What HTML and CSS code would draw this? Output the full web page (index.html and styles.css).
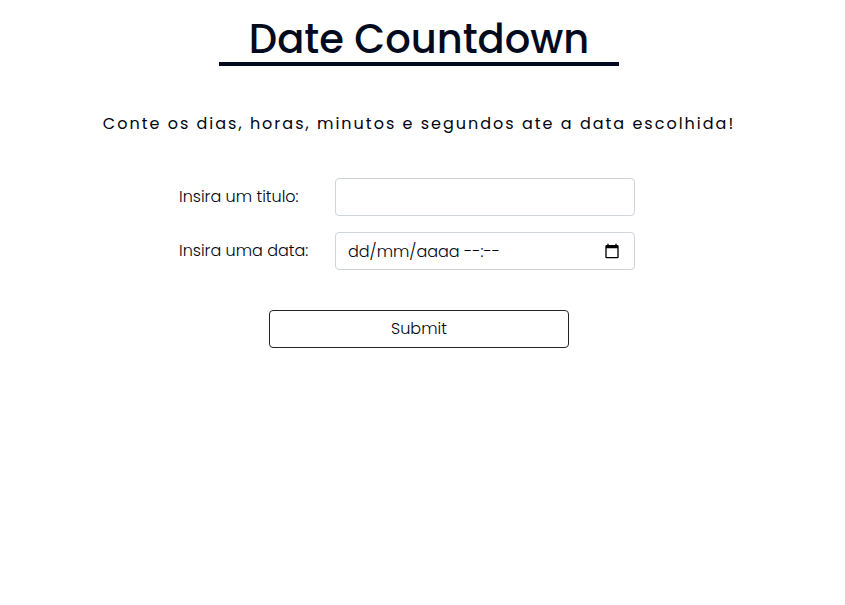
FILE: index.html
```html
<!DOCTYPE html>
<html lang="pt-BR">
<head>
<meta charset="utf-8">
<title>Date Countdown</title>
<link rel="stylesheet" href="styles.css">
</head>
<body>
<main class="page">
  <h1 class="title">Date Countdown</h1>
  <p class="subtitle">Conte os dias, horas, minutos e segundos ate a data escolhida!</p>
  <form class="form">
    <div class="fields">
      <label for="titulo">Insira um titulo:</label>
      <input class="control" id="titulo" type="text">
      <label for="data">Insira uma data:</label>
      <div class="date">
        <input class="control" id="data" type="text" placeholder="dd/mm/aaaa --:--">
        <svg class="calendar" viewBox="0 0 24 24" width="16" height="16" aria-hidden="true"><path d="M20 3h-1V1h-2v2H7V1H5v2H4c-1.100 0-2 .9-2 2v16c0 1.100.9 2 2 2h16c1.100 0 2-.9 2-2V5c0-1.100-.9-2-2-2zm0 18H4V8h16v13z"/></svg>
      </div>
    </div>
    <button class="submit" type="submit">Submit</button>
  </form>
</main>
</body>
</html>
```
FILE: styles.css
```css
* { box-sizing: border-box; }

body {
  margin: 0;
  background: #fff;
  color: #00040f;
  font: 300 16px/24px Poppins, Lato, sans-serif;
}

.page {
  display: flex;
  flex-direction: column;
  align-items: center;
  padding: 16px 7px 0 0;
}

.title {
  width: 400px;
  max-width: 100%;
  margin: 0;
  border-bottom: 4px solid #020a1e;
  color: #020a1e;
  font-size: 40px;
  font-weight: 500;
  line-height: 46px;
  text-align: center;
}

.subtitle {
  margin: 46px 0 42px;
  font-size: 16px;
  font-weight: 400;
  letter-spacing: 2px;
  text-align: center;
}

.form {
  display: flex;
  flex-direction: column;
  align-items: center;
  gap: 40px;
}

.fields {
  display: grid;
  grid-template-columns: 132px 300px;
  gap: 16px 24px;
  align-items: center;
  padding-right: 24px;
}

.control {
  display: block;
  width: 100%;
  height: 38px;
  padding: 6px 12px;
  border: 1px solid #ced4da;
  border-radius: 4px;
  background: #fff;
  color: #00040f;
  font: inherit;
}

.control::placeholder { color: #00040f; opacity: 1; }

.date { position: relative; }

.calendar {
  position: absolute;
  top: 11px;
  right: 15px;
}

.submit {
  width: 300px;
  height: 38px;
  border: 1px solid #212529;
  border-radius: 4px;
  background: #fff;
  color: #00040f;
  font: inherit;
}
```
